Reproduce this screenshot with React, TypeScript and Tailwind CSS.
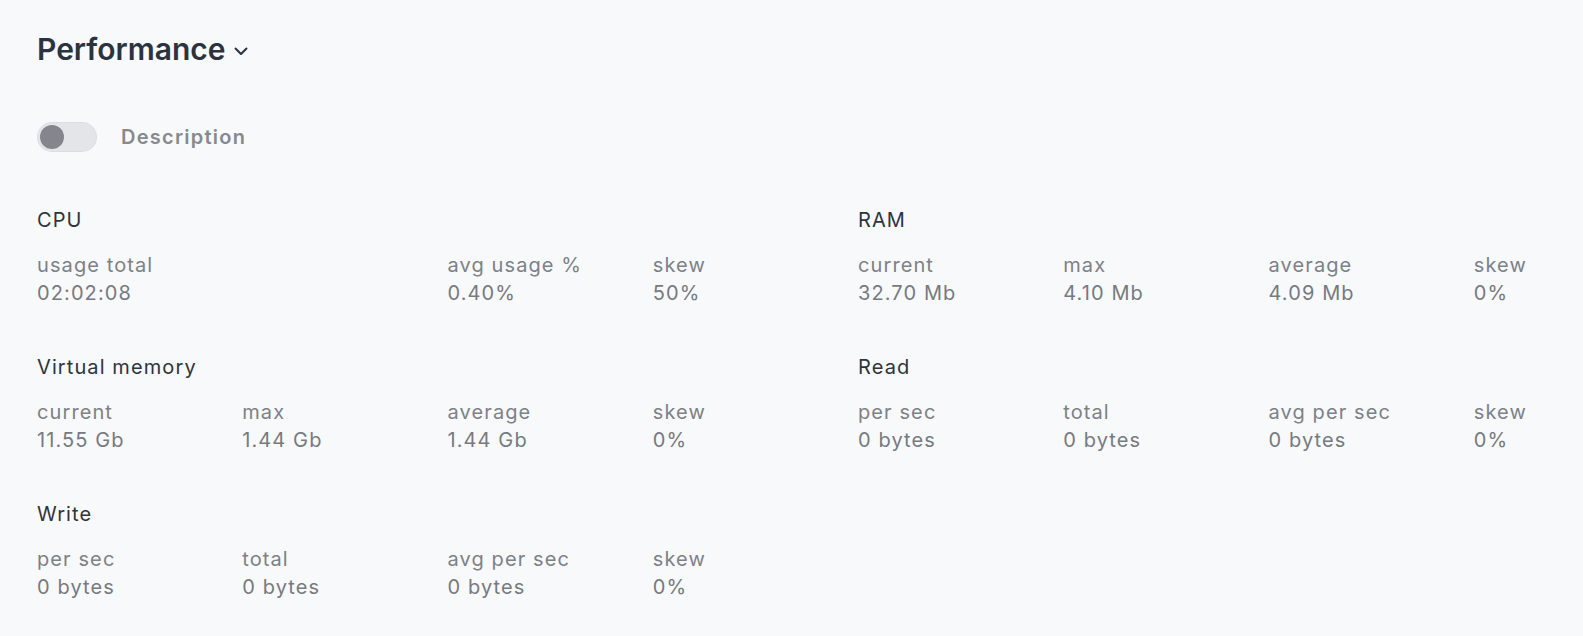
import React, { useState } from 'react';

type Metric = { label: string; value: string; span?: number };
type Section = { title: string; metrics: Metric[] };

const sections: Section[] = [
  {
    title: 'CPU',
    metrics: [
      { label: 'usage total', value: '02:02:08', span: 2 },
      { label: 'avg usage %', value: '0.40%' },
      { label: 'skew', value: '50%' },
    ],
  },
  {
    title: 'RAM',
    metrics: [
      { label: 'current', value: '32.70 Mb' },
      { label: 'max', value: '4.10 Mb' },
      { label: 'average', value: '4.09 Mb' },
      { label: 'skew', value: '0%' },
    ],
  },
  {
    title: 'Virtual memory',
    metrics: [
      { label: 'current', value: '11.55 Gb' },
      { label: 'max', value: '1.44 Gb' },
      { label: 'average', value: '1.44 Gb' },
      { label: 'skew', value: '0%' },
    ],
  },
  {
    title: 'Read',
    metrics: [
      { label: 'per sec', value: '0 bytes' },
      { label: 'total', value: '0 bytes' },
      { label: 'avg per sec', value: '0 bytes' },
      { label: 'skew', value: '0%' },
    ],
  },
  {
    title: 'Write',
    metrics: [
      { label: 'per sec', value: '0 bytes' },
      { label: 'total', value: '0 bytes' },
      { label: 'avg per sec', value: '0 bytes' },
      { label: 'skew', value: '0%' },
    ],
  },
];

const MetricSection: React.FC<{ section: Section }> = ({ section }) => (
  <div className="w-[821px] tracking-[1.1px]">
    <h3 className="text-xl leading-7 text-[#2c343e]">{section.title}</h3>
    <div className="mt-[18px] grid grid-cols-4">
      {section.metrics.map((m, i) => (
        <div key={i} className={m.span === 2 ? 'col-span-2' : ''}>
          <div className="text-xl leading-[27px] text-[#7d8188]">{m.label}</div>
          <div className="text-xl leading-[28px] text-[#767a81]">{m.value}</div>
        </div>
      ))}
    </div>
  </div>
);

export default function App() {
  const [showDesc, setShowDesc] = useState(false);

  return (
    <div
      className="h-[636px] w-full overflow-hidden bg-[#f8f9fb] pl-[37px] pt-[31px]"
      style={{ fontFamily: 'Inter, "Noto Sans", sans-serif' }}
    >
      <button className="flex items-center gap-[7px] text-[#2b333e]">
        <span className="text-3xl leading-9 font-semibold">Performance</span>
        <svg width="16" height="16" viewBox="0 0 16 16" fill="none" className="mt-[3px]">
          <path d="M2.5 5.5 8 11l5.5-5.5" stroke="currentColor" strokeWidth="2" strokeLinecap="round" strokeLinejoin="round" />
        </svg>
      </button>

      <div className="mt-[55px] flex items-center gap-6">
        <button
          onClick={() => setShowDesc(!showDesc)}
          className="flex h-[30px] w-[60px] items-center rounded-full bg-[#e4e5e8] px-[3px] shadow-[inset_0_0_0_1px_rgba(0,0,0,0.03)]"
        >
          <span className={`h-6 w-6 rounded-full bg-[#85868d] ${showDesc ? 'translate-x-[30px]' : ''}`} />
        </button>
        <span className="text-xl leading-7 font-semibold tracking-[1.25px] text-[#87898e]">Description</span>
      </div>

      <div className="mt-[54px] grid grid-cols-[821px_821px] gap-y-[46px]">
        {sections.map((s) => (
          <MetricSection key={s.title} section={s} />
        ))}
      </div>
    </div>
  );
}
